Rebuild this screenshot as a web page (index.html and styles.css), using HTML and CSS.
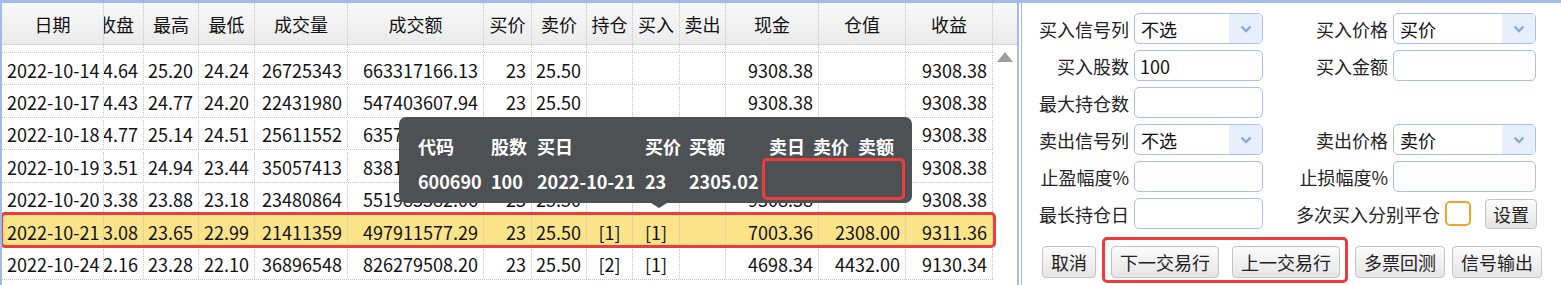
FILE: index.html
```html
<!DOCTYPE html>
<html lang="zh">
<head>
    <meta charset="UTF-8">
    <meta name="viewport" content="width=device-width, initial-scale=1.0">
    <title>回测</title>
    <link rel="stylesheet" href="styles.css">
</head>
<body>
    <div class="frame">
        <section class="grid-panel">
            <div class="grid-head cols">
                <div class="hc">日期</div>
                <div class="hc cut"><span>收盘</span></div>
                <div class="hc">最高</div>
                <div class="hc">最低</div>
                <div class="hc">成交量</div>
                <div class="hc">成交额</div>
                <div class="hc">买价</div>
                <div class="hc">卖价</div>
                <div class="hc">持仓</div>
                <div class="hc">买入</div>
                <div class="hc">卖出</div>
                <div class="hc">现金</div>
                <div class="hc">仓值</div>
                <div class="hc">收益</div>
                <div class="hc sb"></div>
            </div>
            <div class="grid-body">
                <div class="rows">
                    <!-- 上一行已滚出，只剩底边 -->
                    <div class="row cols first">
                        <div class="c"></div><div class="c"></div><div class="c"></div><div class="c"></div><div class="c"></div><div class="c"></div><div class="c"></div><div class="c"></div><div class="c"></div><div class="c"></div><div class="c"></div><div class="c"></div><div class="c"></div><div class="c"></div>
                    </div>
                    <div class="row cols">
                        <div class="c date">2022-10-14</div><div class="c cut"><span>24.64</span></div><div class="c">25.20</div><div class="c">24.24</div><div class="c">26725343</div><div class="c">663317166.13</div><div class="c">23</div><div class="c">25.50</div><div class="c mid"></div><div class="c mid"></div><div class="c"></div><div class="c">9308.38</div><div class="c"></div><div class="c">9308.38</div>
                    </div>
                    <div class="row cols">
                        <div class="c date">2022-10-17</div><div class="c cut"><span>24.43</span></div><div class="c">24.77</div><div class="c">24.20</div><div class="c">22431980</div><div class="c">547403607.94</div><div class="c">23</div><div class="c">25.50</div><div class="c mid"></div><div class="c mid"></div><div class="c"></div><div class="c">9308.38</div><div class="c"></div><div class="c">9308.38</div>
                    </div>
                    <div class="row cols">
                        <div class="c date">2022-10-18</div><div class="c cut"><span>24.77</span></div><div class="c">25.14</div><div class="c">24.51</div><div class="c">25611552</div><div class="c">635712093.86</div><div class="c">23</div><div class="c">25.50</div><div class="c mid"></div><div class="c mid"></div><div class="c"></div><div class="c">9308.38</div><div class="c"></div><div class="c">9308.38</div>
                    </div>
                    <div class="row cols">
                        <div class="c date">2022-10-19</div><div class="c cut"><span>23.51</span></div><div class="c">24.94</div><div class="c">23.44</div><div class="c">35057413</div><div class="c">838127416.02</div><div class="c">23</div><div class="c">25.50</div><div class="c mid"></div><div class="c mid"></div><div class="c"></div><div class="c">9308.38</div><div class="c"></div><div class="c">9308.38</div>
                    </div>
                    <div class="row cols">
                        <div class="c date">2022-10-20</div><div class="c cut"><span>23.38</span></div><div class="c">23.88</div><div class="c">23.18</div><div class="c">23480864</div><div class="c">551983382.06</div><div class="c">23</div><div class="c">25.50</div><div class="c mid"></div><div class="c mid"></div><div class="c"></div><div class="c">9308.38</div><div class="c"></div><div class="c">9308.38</div>
                    </div>
                    <div class="row cols picked">
                        <div class="c date">2022-10-21</div><div class="c cut"><span>23.08</span></div><div class="c">23.65</div><div class="c">22.99</div><div class="c">21411359</div><div class="c">497911577.29</div><div class="c">23</div><div class="c">25.50</div><div class="c mid">[1]</div><div class="c mid">[1]</div><div class="c"></div><div class="c">7003.36</div><div class="c">2308.00</div><div class="c">9311.36</div>
                    </div>
                    <div class="row cols">
                        <div class="c date">2022-10-24</div><div class="c cut"><span>22.16</span></div><div class="c">23.28</div><div class="c">22.10</div><div class="c">36896548</div><div class="c">826279508.20</div><div class="c">23</div><div class="c">25.50</div><div class="c mid">[2]</div><div class="c mid">[1]</div><div class="c"></div><div class="c">4698.34</div><div class="c">4432.00</div><div class="c">9130.34</div>
                    </div>
                </div>
                <div class="vscroll"><i class="up"></i></div>
            </div>

            <!-- 持仓提示 -->
            <div class="tip">
                <div class="tip-grid">
                    <b>代码</b><b>股数</b><b>买日</b><b>买价</b><b>买额</b><b>卖日</b><b>卖价</b><b>卖额</b>
                    <b>600690</b><b>100</b><b>2022-10-21</b><b>23</b><b>2305.02</b><b></b><b></b><b></b>
                </div>
                <div class="tip-mark"></div>
            </div>
        </section>

        <section class="form-panel">
            <div class="frow">
                <label class="lb1">买入信号列</label>
                <div class="sel w1"><span>不选</span><i class="drop"><svg width="12" height="8" viewBox="0 0 12 8"><polyline points="1.5,1.5 6,6 10.5,1.5" fill="none" stroke="#86a9e0" stroke-width="2.4"/></svg></i></div>
                <label class="lb2">买入价格</label>
                <div class="sel w2"><span>买价</span><i class="drop"><svg width="12" height="8" viewBox="0 0 12 8"><polyline points="1.5,1.5 6,6 10.5,1.5" fill="none" stroke="#86a9e0" stroke-width="2.4"/></svg></i></div>
            </div>
            <div class="frow">
                <label class="lb1">买入股数</label>
                <div class="inp w1">100</div>
                <label class="lb2">买入金额</label>
                <div class="inp w2"></div>
            </div>
            <div class="frow">
                <label class="lb1">最大持仓数</label>
                <div class="inp w1"></div>
            </div>
            <div class="frow">
                <label class="lb1">卖出信号列</label>
                <div class="sel w1"><span>不选</span><i class="drop"><svg width="12" height="8" viewBox="0 0 12 8"><polyline points="1.5,1.5 6,6 10.5,1.5" fill="none" stroke="#86a9e0" stroke-width="2.4"/></svg></i></div>
                <label class="lb2">卖出价格</label>
                <div class="sel w2"><span>卖价</span><i class="drop"><svg width="12" height="8" viewBox="0 0 12 8"><polyline points="1.5,1.5 6,6 10.5,1.5" fill="none" stroke="#86a9e0" stroke-width="2.4"/></svg></i></div>
            </div>
            <div class="frow">
                <label class="lb1">止盈幅度%</label>
                <div class="inp w1"></div>
                <label class="lb2">止损幅度%</label>
                <div class="inp w2"></div>
            </div>
            <div class="frow">
                <label class="lb1">最长持仓日</label>
                <div class="inp w1"></div>
                <label class="lb3">多次买入分别平仓</label>
                <i class="check"></i>
                <button class="btn set">设置</button>
            </div>
            <div class="btn-row">
                <button class="btn">取消</button>
                <div class="mark-box">
                    <button class="btn">下一交易行</button>
                    <button class="btn">上一交易行</button>
                </div>
                <button class="btn">多票回测</button>
                <button class="btn">信号输出</button>
            </div>
        </section>
    </div>
</body>
</html>
```

FILE: styles.css
```css
*{
    box-sizing: border-box;
}
body{
    margin: 0;
    font-family: "Noto Sans CJK SC", "Noto Sans", sans-serif;
    font-size: 18px;
    color: #111;
    background: #fff;
}
.frame{
    position: relative;
    display: flex;
    height: 285px;
    border-top: 3px solid #a3bbe8;
    overflow: hidden;
}
.grid-panel{
    width: 1019px;
    border-left: 2px solid #a3bbe8;
    border-right: 2px solid #a3bbe8;
}
.cols{
    display: grid;
    grid-template-columns: 102px 40px 55px 56px 93px 136px 48px 55px 46px 47px 46px 93px 87px 87px;
}
.grid-head{
    grid-template-columns: 102px 40px 55px 56px 93px 136px 48px 55px 46px 47px 46px 93px 87px 87px 24px;
    height: 42px;
    background: linear-gradient(#f8f8f8, #ebebeb);
    border-bottom: 1px solid #d6d6d6;
}
.hc{
    display: flex;
    align-items: center;
    justify-content: center;
    border-right: 1px dotted #c4c4c4;
    white-space: nowrap;
}
.hc.sb{
    border-right: none;
}
.cut{
    overflow: hidden;
}
.hc.cut{
    justify-content: flex-start;
}
.hc.cut span{
    display: block;
    flex: none;
    width: 56px;
    margin-left: -16px;
    text-align: center;
}
.grid-body{
    display: flex;
    height: 240px;
    overflow: hidden;
}
.rows{
    width: 991px;
}
.row{
    height: 32.4px;
    padding-top: 2px;
    border-bottom: 1px dotted #c4c4c4;
}
.row.first{
    height: 8px;
    padding-top: 0;
}
.row.picked{
    position: relative;
    background: #fae389;
}
.row.picked::after{
    content: "";
    position: absolute;
    left: -2px;
    top: -3px;
    right: -3px;
    bottom: -2px;
    border: 3px solid #ef3b3b;
    border-radius: 5px;
}
.c{
    display: flex;
    align-items: center;
    justify-content: flex-end;
    padding: 0 5px;
    border-right: 1px dotted #c4c4c4;
    white-space: nowrap;
}
.c.date{
    justify-content: flex-start;
}
.c.mid{
    justify-content: center;
}
.c.cut{
    padding: 0;
    justify-content: flex-start;
}
.c.cut span{
    display: block;
    flex: none;
    width: 55px;
    margin-left: -16px;
    padding-right: 5px;
    text-align: right;
}
.vscroll{
    width: 24px;
    padding-top: 7px;
}
.up{
    display: block;
    width: 0;
    height: 0;
    margin-left: 4px;
    border-left: 8px solid transparent;
    border-right: 8px solid transparent;
    border-bottom: 10px solid #9d9d9d;
}

/* 提示框 */
.tip{
    position: absolute;
    left: 399px;
    top: 114px;
    width: 513px;
    height: 86px;
    padding: 11px 0 0 19px;
    background: #4e5154;
    border-radius: 7px;
    color: #fff;
}
.tip::after{
    content: "";
    position: absolute;
    left: 252px;
    bottom: -5px;
    border-left: 8px solid transparent;
    border-right: 8px solid transparent;
    border-top: 5px solid #4e5154;
}
.tip-grid{
    display: grid;
    grid-template-columns: 73px 46px 108px 44px 80px 44px 45px 40px;
    grid-auto-rows: 35px;
    align-items: center;
}
.tip-grid b{
    font-weight: bold;
    white-space: nowrap;
}
.tip-mark{
    position: absolute;
    left: 363px;
    top: 41px;
    width: 143px;
    height: 42px;
    border: 3px solid #ef3b3b;
    border-radius: 5px;
}

/* 右侧表单 */
.form-panel{
    flex: 1;
    margin-left: 2px;
    padding-top: 10px;
    border-left: 1px solid #a3bbe8;
    color: #222;
}
.frow{
    display: flex;
    align-items: center;
    height: 31px;
    margin-bottom: 6px;
}
.lb1, .lb2, .lb3{
    text-align: right;
    white-space: nowrap;
    padding-right: 5px;
}
.lb1{
    width: 112px;
}
.lb2{
    width: 130px;
}
.lb3{
    width: 182px;
}
.w1{
    width: 129px;
}
.w2{
    width: 143px;
}
.inp, .sel{
    height: 31px;
    border: 1px solid #a9c1ea;
    border-radius: 5px;
    padding-left: 5px;
    display: flex;
    align-items: center;
    color: #111;
}
.sel{
    padding-left: 6px;
    justify-content: space-between;
    overflow: hidden;
}
.drop{
    display: flex;
    align-items: center;
    justify-content: center;
    width: 33px;
    height: 100%;
    background: #e7effc;
}
.check{
    display: block;
    width: 26px;
    height: 25px;
    border: 2px solid #f2a527;
    border-radius: 5px;
}
.btn{
    height: 32px;
    padding: 0 8px;
    font-family: inherit;
    font-size: 18px;
    color: #222;
    border: 1px solid #c3c3c3;
    border-radius: 4px;
    background: linear-gradient(#fbfbfb, #e5e5e5);
}
.btn.set{
    height: 30px;
    margin-left: 14px;
    padding: 0 7px;
}
.btn-row{
    display: flex;
    align-items: flex-start;
    margin-top: 17px;
    padding-left: 20px;
    gap: 7px;
}
.btn-row > .btn:first-child{
    margin-right: -1px;
}
.mark-box{
    display: flex;
    gap: 13px;
    margin-top: -9px;
    padding: 6px 5px 2px 6px;
    border: 3px solid #ef3b3b;
    border-radius: 5px;
}
```
